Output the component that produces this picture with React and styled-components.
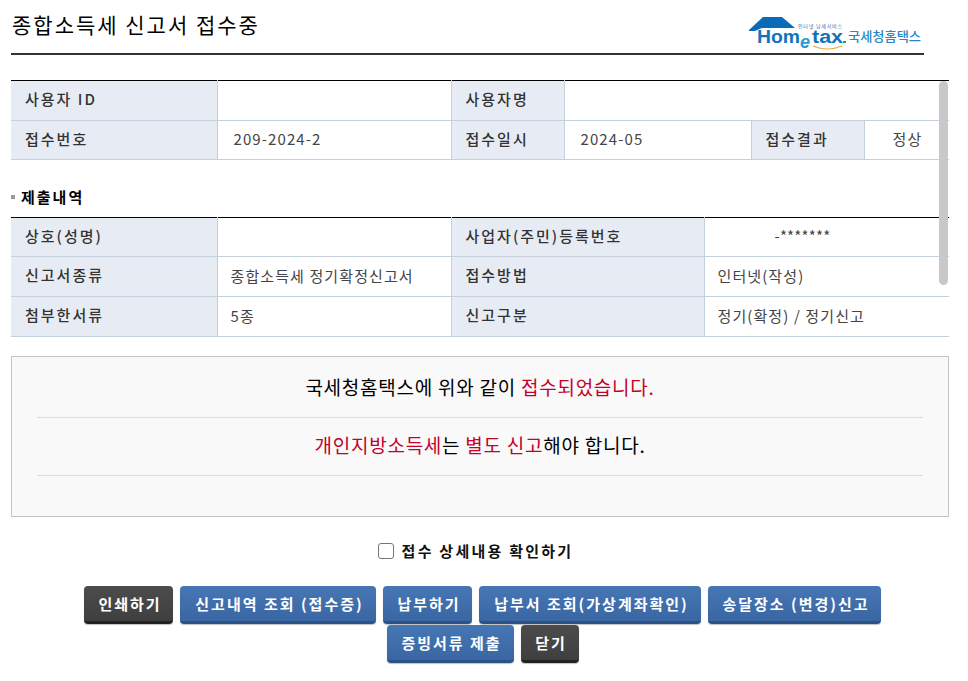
import React from "react";
import styled, { createGlobalStyle } from "styled-components";

const Global = createGlobalStyle`
  html, body { margin: 0; padding: 0; background: #fff; }
  body { font-family: "Noto Sans CJK KR", "Liberation Sans", sans-serif; overflow: hidden; }
`;
const Page = styled.div`
  position: relative;
  width: 968px;
  height: 681px;
  box-sizing: border-box;
  padding: 0 19px 0 11px;
  overflow: hidden;
`;
const Header = styled.header`
  width: 913px;
  height: 55px;
  box-sizing: border-box;
  border-bottom: 2px solid #333;
  display: flex;
  justify-content: space-between;
`;
const Title = styled.h1`
  margin: 9px 0 0 1px;
  font-size: 21px;
  line-height: 31px;
  font-weight: 400;
  letter-spacing: 2px;
  color: #000;
`;
const Logo = styled.svg`
  display: block;
  margin: 13px 1px 0 0;
`;
const Table = styled.table`
  width: 938px;
  border-collapse: collapse;
  table-layout: fixed;
  border-top: 1px solid #000;
  margin-top: ${(p) => p.$top}px;
`;
const Row = styled.tr`
  height: ${(p) => p.$h}px;
`;
const Th = styled.th`
  background: #e7ecf4;
  border: 1px solid #c5d0dd;
  border-top: ${(p) => (p.$first ? "0" : "1px solid #c5d0dd")};
  border-left: ${(p) => (p.$edge ? "0" : "1px solid #c5d0dd")};
  padding: 0 0 4px 14px;
  text-align: left;
  font-size: 15px;
  font-weight: 500;
  letter-spacing: 2px;
  color: #333;
  white-space: nowrap;
`;
const Td = styled.td`
  background: #fff;
  border: 1px solid #c5d0dd;
  border-top: ${(p) => (p.$first ? "0" : "1px solid #c5d0dd")};
  border-right: 0;
  padding: 0 0 3px ${(p) => p.$pad ?? 13}px;
  text-align: left;
  font-size: 15px;
  font-weight: 400;
  letter-spacing: ${(p) => p.$ls ?? 1.1}px;
  color: #444;
  white-space: nowrap;
`;
const Section = styled.h2`
  display: flex;
  align-items: center;
  gap: 6px;
  margin: 27px 0 0;
  height: 21px;
  font-size: 15px;
  line-height: 17px;
  padding-bottom: 2px;
  box-sizing: border-box;
  font-weight: 700;
  letter-spacing: 2px;
  color: #000;
`;
const Bullet = styled.span`
  width: 4px;
  height: 4px;
  background: #999;
`;
const Notice = styled.section`
  width: 938px;
  height: 161px;
  margin-top: 19px;
  box-sizing: border-box;
  border: 1px solid #c4c4c4;
  background: #f9f9f9;
  padding: 0 25px;
`;
const NoticeLine = styled.p`
  margin: 0;
  height: ${(p) => p.$h}px;
  box-sizing: border-box;
  border-bottom: 1px solid #ddd;
  display: flex;
  align-items: center;
  justify-content: center;
  font-size: 19px;
  letter-spacing: 0.75px;
  color: #000;
  padding-bottom: ${(p) => p.$pb}px;
`;
const Red = styled.span`
  color: #c4002b;
  white-space: pre;
`;
const Plain = styled.span`
  white-space: pre;
`;
const CheckRow = styled.label`
  display: flex;
  align-items: center;
  justify-content: center;
  gap: 8px;
  width: 929px;
  margin-top: 25px;
  height: 18px;
  padding-bottom: 1px;
  box-sizing: border-box;
  font-size: 15px;
  font-weight: 700;
  letter-spacing: 2.25px;
  color: #111;
`;
const Check = styled.input`
  width: 16px;
  height: 16px;
  margin: 0;
  appearance: none;
  background: #fff;
  border: 1px solid #767676;
  border-radius: 3px;
`;
const Buttons = styled.div`
  width: 925px;
  margin: 26px 0 0 9px;
  display: flex;
  flex-wrap: wrap;
  justify-content: center;
  column-gap: 7px;
  row-gap: 1px;
`;
const Btn = styled.button`
  height: 38px;
  width: ${(p) => p.$w}px;
  padding: 0 0 0 3px;
  box-sizing: border-box;
  border: 0;
  border-radius: 4px;
  background: ${(p) => (p.$dark ? "linear-gradient(#4c4c4c, #3f3f3f)" : "linear-gradient(#4676b4, #3a67a3)")};
  border-bottom: 3px solid ${(p) => (p.$dark ? "#222" : "#2c5285")};
  box-shadow: 0 1px 1px rgba(0, 0, 0, 0.25);
  color: #fff;
  font-family: inherit;
  font-size: 15px;
  font-weight: 700;
  letter-spacing: 2px;
  white-space: pre;
`;
const Scrollbar = styled.div`
  position: absolute;
  left: 939px;
  top: 81px;
  width: 9px;
  height: 204px;
  border-radius: 5px;
  background: #c8c8c8;
`;

const Cols = ({ widths }) => (
  <colgroup>
    {widths.map((w, i) => (
      <col key={i} style={{ width: w }} />
    ))}
  </colgroup>
);

export default function App() {
  return (
    <Page>
      <Global />
      <Header>
        <Title>종합소득세 신고서 접수중</Title>
        <Logo width="176" height="40" viewBox="0 0 176 40">
          <path d="M2 17 L16 4 L35 4 L48 15 L15 15 L8 18 L2 18 Z" fill="#0a6cb8" />
          <text x="10" y="30" fontFamily="Liberation Sans" fontWeight="700" fontSize="19" fill="#1273b8" textLength="43" lengthAdjust="spacingAndGlyphs">Hom</text>
          <text x="53" y="35" fontFamily="Liberation Sans" fontWeight="700" fontSize="18" fontStyle="italic" fill="#2a9bd0">e</text>
          <text x="65" y="30" fontFamily="Liberation Sans" fontWeight="700" fontSize="18" fill="#1273b8" textLength="31" lengthAdjust="spacingAndGlyphs">tax</text>
          <rect x="96" y="28" width="3" height="2" fill="#2ba84a" />
          <path d="M66 33 Q80 39 95 33" fill="none" stroke="#f3a73a" strokeWidth="1.2" />
          <text x="51" y="15" fontFamily="Noto Sans CJK KR" fontSize="5" fill="#3a6ea5" textLength="44">인터넷 납세서비스</text>
          <text x="101" y="28" fontFamily="Noto Sans CJK KR" fontWeight="500" fontSize="13" fill="#2a86c8" textLength="73" lengthAdjust="spacingAndGlyphs">국세청홈택스</text>
        </Logo>
      </Header>

      <Table $top={25}>
        <Cols widths={[206, 234, 113, 187, 113, 85]} />
        <tbody>
          <Row $h={40}>
            <Th $first $edge>사용자 ID</Th>
            <Td $first></Td>
            <Th $first>사용자명</Th>
            <Td $first colSpan={3}></Td>
          </Row>
          <Row $h={39}>
            <Th $edge>접수번호</Th>
            <Td $pad={16}>209-2024-2</Td>
            <Th>접수일시</Th>
            <Td $pad={16}>2024-05</Td>
            <Th>접수결과</Th>
            <Td $pad={28}>정상</Td>
          </Row>
        </tbody>
      </Table>

      <Section>
        <Bullet />
        제출내역
      </Section>

      <Table $top={9}>
        <Cols widths={[206, 234, 253, 245]} />
        <tbody>
          <Row $h={39}>
            <Th $first $edge>상호(성명)</Th>
            <Td $first></Td>
            <Th $first>사업자(주민)등록번호</Th>
            <Td $first $pad={70} $ls={0.2}>-*******</Td>
          </Row>
          <Row $h={40}>
            <Th $edge>신고서종류</Th>
            <Td>종합소득세 정기확정신고서</Td>
            <Th>접수방법</Th>
            <Td>인터넷(작성)</Td>
          </Row>
          <Row $h={40}>
            <Th $edge>첨부한서류</Th>
            <Td>5종</Td>
            <Th>신고구분</Th>
            <Td>정기(확정) / 정기신고</Td>
          </Row>
        </tbody>
      </Table>

      <Notice>
        <NoticeLine $h={61} $pb={2}>
          <Plain>국세청홈택스에 위와 같이 </Plain>
          <Red>접수되었습니다.</Red>
        </NoticeLine>
        <NoticeLine $h={58} $pb={4}>
          <Red>개인지방소득세</Red>
          <Plain>는 </Plain>
          <Red>별도 신고</Red>
          <Plain>해야 합니다.</Plain>
        </NoticeLine>
      </Notice>

      <CheckRow>
        <Check type="checkbox" />
        접수 상세내용 확인하기
      </CheckRow>

      <Buttons>
        <Btn $dark $w={89}>인쇄하기</Btn>
        <Btn $w={196}>신고내역 조회 (접수증)</Btn>
        <Btn $w={89}>납부하기</Btn>
        <Btn $w={222}>납부서 조회(가상계좌확인)</Btn>
        <Btn $w={173}>송달장소 (변경)신고</Btn>
        <Btn $w={127}>증빙서류 제출</Btn>
        <Btn $dark $w={58}>닫기</Btn>
      </Buttons>
      <Scrollbar />
    </Page>
  );
}
